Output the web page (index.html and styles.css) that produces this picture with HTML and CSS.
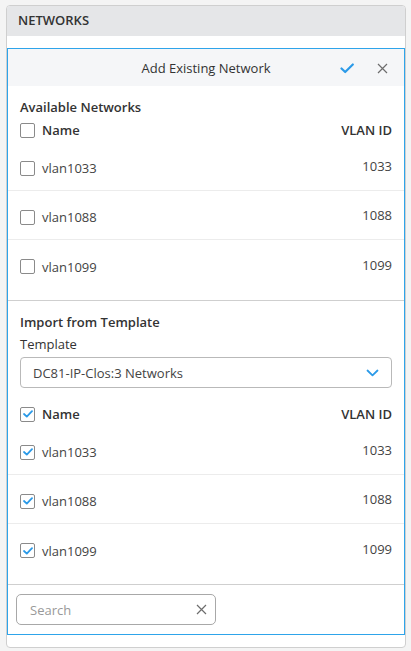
FILE: index.html
```html
<!DOCTYPE html>
<html>
<head>
<meta charset="utf-8">
<link rel="stylesheet" href="styles.css">
</head>
<body>
<div class="card">
  <div class="card-head">NETWORKS</div>
  <div class="panel">
    <div class="panel-head">
      <span class="panel-title">Add Existing Network</span>
      <span class="panel-actions">
        <svg class="ic-check" width="14" height="11" viewBox="0 0 14 11"><path d="M1.5 5.5 L5.2 9 L12.8 1.5" fill="none" stroke="#2b9ae8" stroke-width="2.2" stroke-linecap="round" stroke-linejoin="round"/></svg>
        <svg class="ic-close" width="11" height="11" viewBox="0 0 11 11"><path d="M1 1 L10 10 M10 1 L1 10" stroke="#6d6d6d" stroke-width="1.2"/></svg>
      </span>
    </div>

    <div class="section">
      <div class="sec-title">Available Networks</div>
      <div class="thead">
        <span class="cell-name"><span class="cb"></span>Name</span>
        <span class="cell-id">VLAN ID</span>
      </div>
      <div class="row"><span class="cell-name"><span class="cb"></span>vlan1033</span><span class="cell-id">1033</span></div>
      <div class="row"><span class="cell-name"><span class="cb"></span>vlan1088</span><span class="cell-id">1088</span></div>
      <div class="row last"><span class="cell-name"><span class="cb"></span>vlan1099</span><span class="cell-id">1099</span></div>
    </div>

    <div class="section sec2">
      <div class="sec-title">Import from Template</div>
      <div class="label">Template</div>
      <div class="select">
        <span>DC81-IP-Clos:3 Networks</span>
        <svg width="13" height="8" viewBox="0 0 13 8"><path d="M1.5 1.5 L6.5 6.3 L11.5 1.5" fill="none" stroke="#2b9ae8" stroke-width="1.8" stroke-linecap="round" stroke-linejoin="round"/></svg>
      </div>
      <div class="thead thead2">
        <span class="cell-name"><span class="cb on"><svg width="10" height="8" viewBox="0 0 10 8"><path d="M1 4 L3.8 6.6 L9 1.2" fill="none" stroke="#2b9ae8" stroke-width="1.8" stroke-linecap="round" stroke-linejoin="round"/></svg></span>Name</span>
        <span class="cell-id">VLAN ID</span>
      </div>
      <div class="row"><span class="cell-name"><span class="cb on"><svg width="10" height="8" viewBox="0 0 10 8"><path d="M1 4 L3.8 6.6 L9 1.2" fill="none" stroke="#2b9ae8" stroke-width="1.8" stroke-linecap="round" stroke-linejoin="round"/></svg></span>vlan1033</span><span class="cell-id">1033</span></div>
      <div class="row"><span class="cell-name"><span class="cb on"><svg width="10" height="8" viewBox="0 0 10 8"><path d="M1 4 L3.8 6.6 L9 1.2" fill="none" stroke="#2b9ae8" stroke-width="1.8" stroke-linecap="round" stroke-linejoin="round"/></svg></span>vlan1088</span><span class="cell-id">1088</span></div>
      <div class="row last"><span class="cell-name"><span class="cb on"><svg width="10" height="8" viewBox="0 0 10 8"><path d="M1 4 L3.8 6.6 L9 1.2" fill="none" stroke="#2b9ae8" stroke-width="1.8" stroke-linecap="round" stroke-linejoin="round"/></svg></span>vlan1099</span><span class="cell-id">1099</span></div>
    </div>

    <div class="footer">
      <div class="search">
        <span class="ph">Search</span>
        <svg width="11" height="11" viewBox="0 0 11 11"><path d="M1 1 L10 10 M10 1 L1 10" stroke="#6d6d6d" stroke-width="1.2"/></svg>
      </div>
    </div>
  </div>
</div>
</body>
</html>
```

FILE: styles.css
```css
* { box-sizing: border-box; }
html, body { margin: 0; padding: 0; }
body {
  background: #f4f4f4;
  font-family: "Open Sans", "Noto Sans", sans-serif;
  font-size: 13px;
  color: #333;
  width: 411px;
  height: 651px;
}
.card {
  margin: 5px 0 0 6px;
  width: 400px;
  height: 643px;
  background: #fff;
  border: 1px solid #cfcfcf;
  border-radius: 4px;
  overflow: hidden;
}
.card-head {
  height: 30px;
  background: #e5e6e8;
  font-weight: 600;
  font-size: 13px;
  color: #333;
  padding-left: 11px;
  line-height: 29px;
}
.panel {
  margin-top: 12px;
  border: 1px solid #2ea4ea;
  height: 587px;
  display: flex;
  flex-direction: column;
}
.panel-head {
  height: 38px;
  background: #f5f6f8;
  display: flex;
  align-items: center;
  justify-content: center;
  position: relative;
}
.panel-title { font-size: 13px; color: #333; }
.panel-actions {
  position: absolute;
  right: 16px;
  top: 0;
  height: 38px;
  display: flex;
  align-items: center;
  gap: 23px;
}
.ic-check { margin-top: 1px; }
.section { padding: 12px 0 11px; }
.sec-title {
  font-weight: 600;
  line-height: 18px;
  padding: 0 12px;
  color: #333;
}
.thead {
  height: 24px;
  margin-top: 2px;
  display: flex;
  align-items: center;
  justify-content: space-between;
  padding: 0 12px;
  font-weight: 600;
  color: #333;
}
.thead2 { margin-top: 14px; }
.cell-name { display: flex; align-items: center; }
.cb {
  width: 15px;
  height: 15px;
  border: 1px solid #8a8a8a;
  border-radius: 2px;
  margin-right: 7px;
  display: inline-flex;
  align-items: center;
  justify-content: center;
  background: #fff;
}
.row {
  height: 49px;
  display: flex;
  align-items: center;
  justify-content: space-between;
  padding: 4px 12px 0;
  border-bottom: 1px solid #ececec;
  color: #444;
}
.row .cell-id { margin-top: -4px; }
.row.last { border-bottom: none; }
.sec2 {
  border-top: 1px solid #cfcfcf;
  padding-top: 12px;
  padding-bottom: 11px;
}
.label {
  line-height: 18px;
  padding: 0 12px;
  margin-top: 4px;
  color: #333;
}
.select {
  margin: 4px 12px 0;
  height: 31px;
  border: 1px solid #b9b9b9;
  border-radius: 4px;
  display: flex;
  align-items: center;
  justify-content: space-between;
  padding: 0 12px 0 12px;
  color: #444;
}
.footer {
  border-top: 1px solid #cfcfcf;
  padding: 9px 8px;
}
.search {
  width: 200px;
  height: 31px;
  border: 1px solid #a8a8a8;
  border-radius: 5px;
  display: flex;
  align-items: center;
  justify-content: space-between;
  padding: 0 8px 0 13px;
}
.ph { color: #999; font-size: 13px; }
```
